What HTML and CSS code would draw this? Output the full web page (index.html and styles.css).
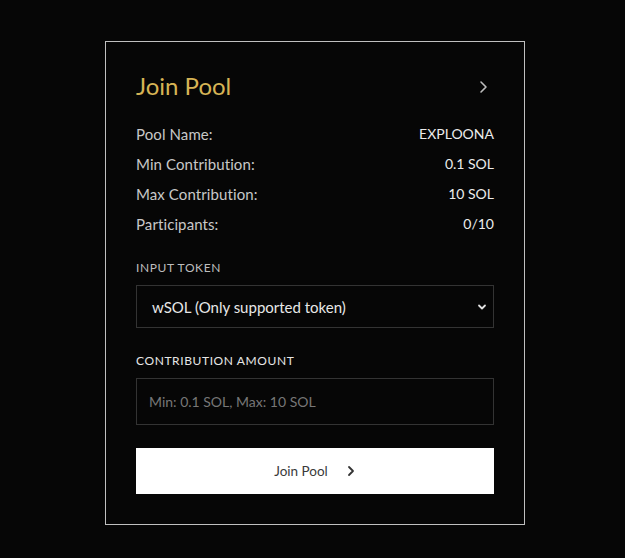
FILE: index.html
```html
<!DOCTYPE html>
<html>
<head>
<meta charset="utf-8">
<link rel="stylesheet" href="styles.css">
</head>
<body>
<div class="card">
  <div class="header">
    <h1 class="title">Join Pool</h1>
    <svg class="chev" width="12" height="14" viewBox="0 0 12 14"><path d="M3 2 L8 7 L3 12" fill="none" stroke="#bdbdbd" stroke-width="1.6" stroke-linecap="round" stroke-linejoin="round"/></svg>
  </div>
  <div class="rows">
    <div class="row"><span class="label">Pool Name:</span><span class="value">EXPLOONA</span></div>
    <div class="row"><span class="label">Min Contribution:</span><span class="value">0.1 SOL</span></div>
    <div class="row"><span class="label">Max Contribution:</span><span class="value">10 SOL</span></div>
    <div class="row"><span class="label">Participants:</span><span class="value">0/10</span></div>
  </div>
  <div class="field first">
    <div class="flabel">INPUT TOKEN</div>
    <div class="select">
      <span>wSOL (Only supported token)</span>
      <svg width="10" height="8" viewBox="0 0 10 8"><path d="M2 2.5 L5 5.5 L8 2.5" fill="none" stroke="#e0e0e0" stroke-width="1.8" stroke-linecap="round" stroke-linejoin="round"/></svg>
    </div>
  </div>
  <div class="field second">
    <div class="flabel bright">CONTRIBUTION AMOUNT</div>
    <div class="input">Min: 0.1 SOL, Max: 10 SOL</div>
  </div>
  <div class="button">
    <span>Join Pool</span>
    <svg width="10" height="12" viewBox="0 0 10 12"><path d="M3 2 L7 6 L3 10" fill="none" stroke="#333" stroke-width="1.8" stroke-linecap="round" stroke-linejoin="round"/></svg>
  </div>
</div>
</body>
</html>
```
FILE: styles.css
```css
html, body {
  margin: 0;
  padding: 0;
  background: #060606;
}
body {
  font-family: Lato, "Liberation Sans", sans-serif;
  padding-top: 41px;
  padding-left: 105px;
}
.card {
  box-sizing: border-box;
  width: 420px;
  height: 484px;
  border: 1px solid #bfbfbf;
  background: #060606;
  padding: 30px 30px 30px 30px;
  display: flex;
  flex-direction: column;
}
.header {
  display: flex;
  align-items: center;
  justify-content: space-between;
  height: 30px;
  padding-right: 4px;
}
.title {
  margin: 0;
  font-size: 24px;
  font-weight: 400;
  color: #d6b455;
  line-height: 30px;
  margin-top: -2px;
}
.rows {
  margin-top: 17px;
  display: flex;
  flex-direction: column;
}
.row {
  display: flex;
  justify-content: space-between;
  height: 30px;
  line-height: 30px;
}
.label { color: #c8c8c8; font-size: 15px; letter-spacing: 0.1px; }
.value { color: #ececec; font-size: 14px; }
.field { display: flex; flex-direction: column; }
.field.first { margin-top: 21px; }
.field.second { margin-top: 25px; }
.flabel {
  font-size: 12px;
  line-height: 16px;
  color: #bdbdbd;
  letter-spacing: 0.6px;
}
.flabel.bright { color: #e6e6e6; }
.select {
  box-sizing: border-box;
  margin-top: 9px;
  height: 43px;
  border: 1px solid #333;
  display: flex;
  align-items: center;
  justify-content: space-between;
  padding: 0 6px 0 15px;
  font-size: 15px;
  color: #e8e8e8;
}
.input {
  box-sizing: border-box;
  margin-top: 9px;
  height: 47px;
  border: 1px solid #333;
  display: flex;
  align-items: center;
  padding: 0 12px;
  font-size: 14px;
  color: #777;
}
.button {
  margin-top: 23px;
  height: 46px;
  background: #fff;
  display: flex;
  align-items: center;
  justify-content: center;
  gap: 18px;
  font-size: 13.5px;
  color: #3a3a3a;
}
```
